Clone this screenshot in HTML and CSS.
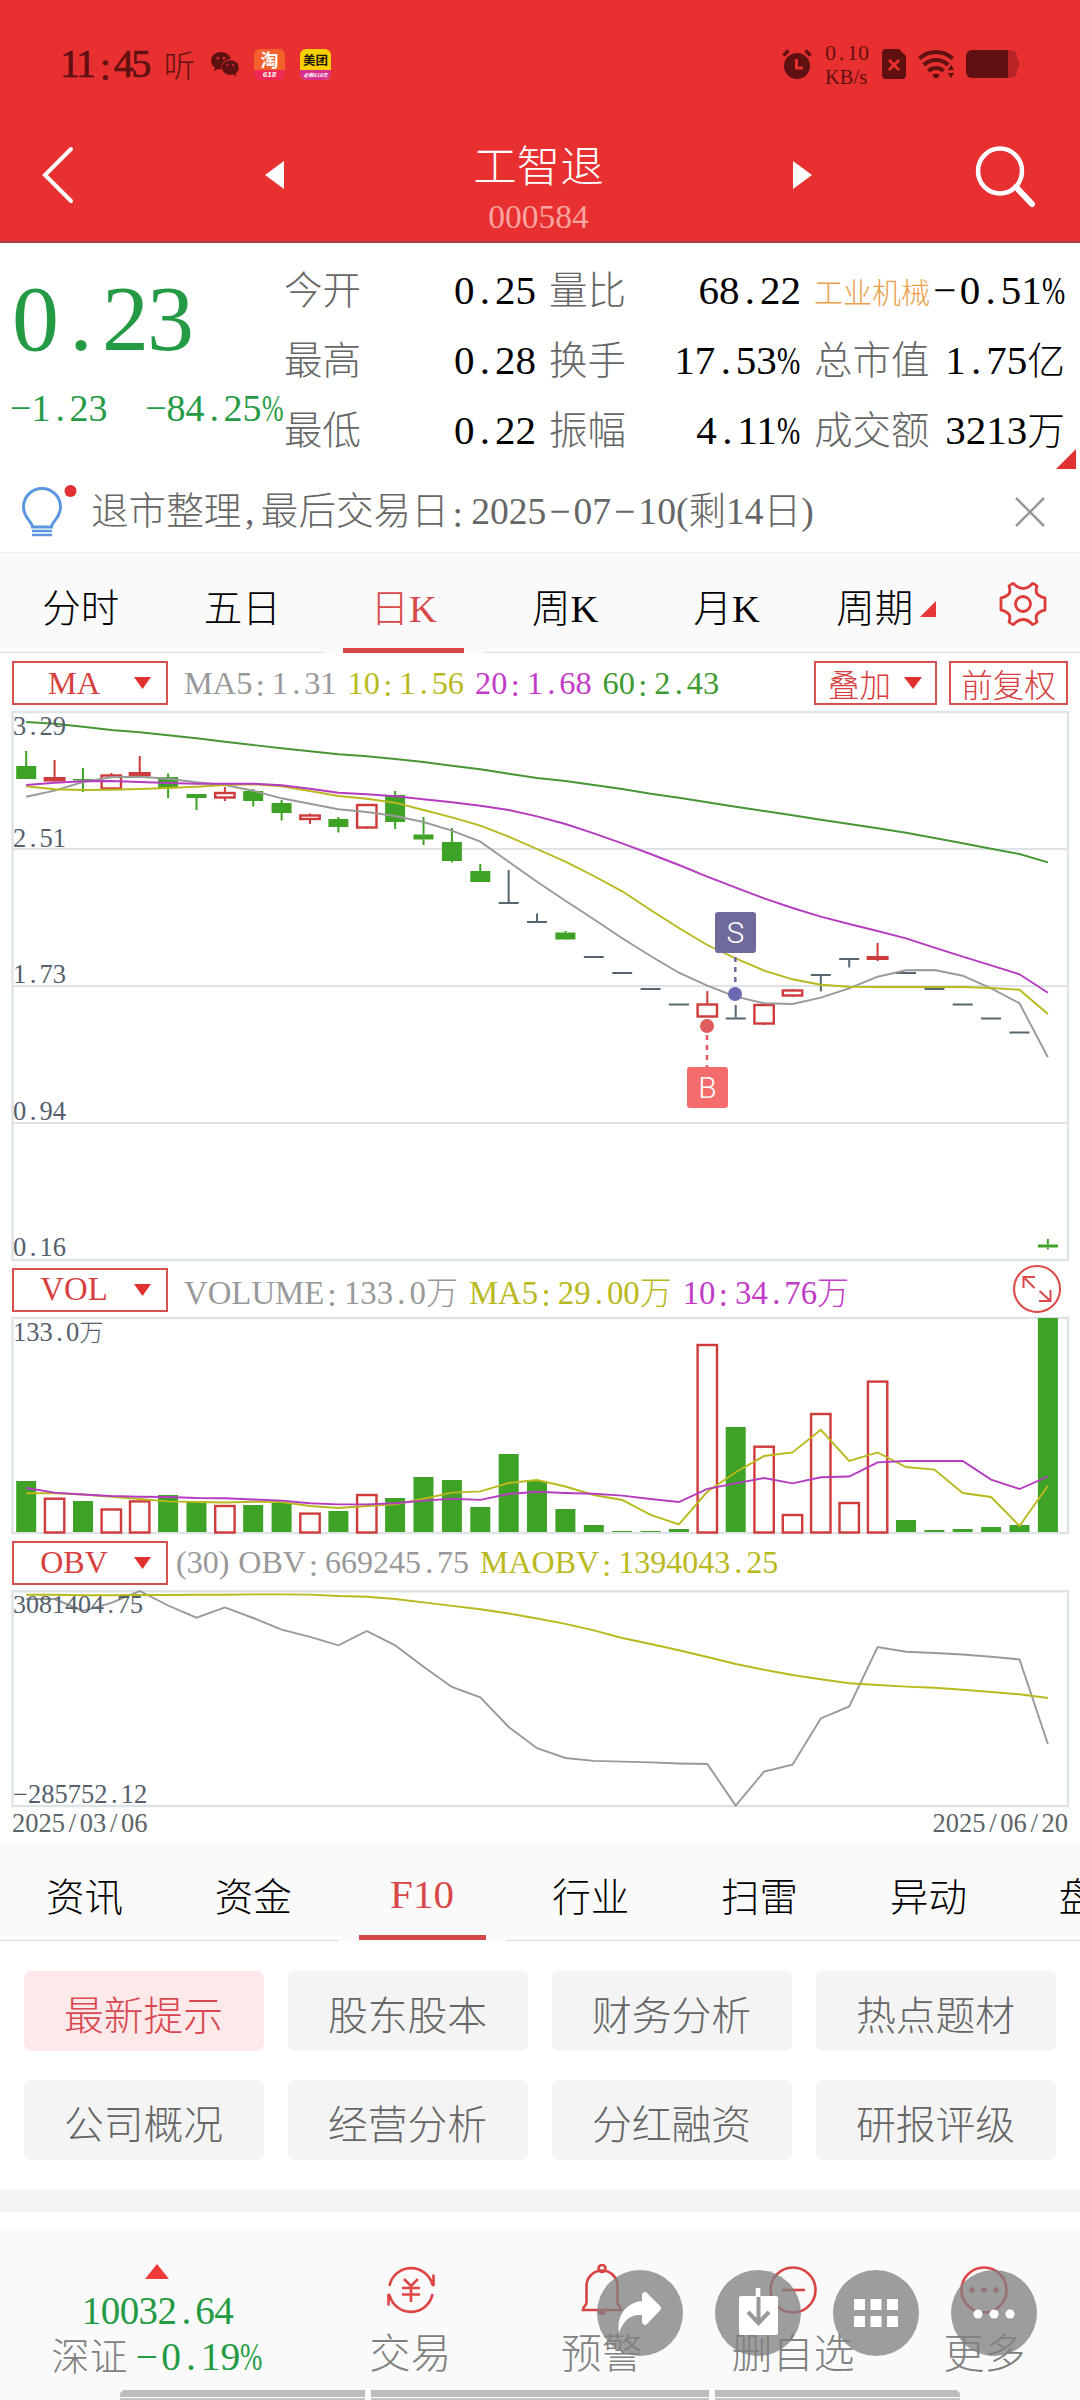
FILE: index.html
```html
<!DOCTYPE html>
<html lang="zh-CN">
<head>
<meta charset="utf-8">
<title>工智退 000584</title>
<link rel="stylesheet" href="styles.css">
</head>
<body>
<div class="phone">
  <header class="top">
    <div class="status">
      <span class="clock">11<i class="c">:</i>45</span>
      <span class="listen">听</span>
      <svg class="wechat" width="28" height="25" viewBox="0 0 29 26"><path fill="#5f1010" d="M10.500 0C4.500 0 0 4 0 9c0 3 1.500 5.300 4 7l-1 4 4-2.200c1.500.4 2.600.5 4 .4C10 12 14 7.500 20.500 7.200 19.500 3 15.500 0 10.500 0z"/><path fill="#5f1010" d="M20 8.500c-5 0-8.700 3.400-8.700 7.600s3.700 7.600 8.700 7.600c1 0 2-.1 3-.4l3.500 2-.9-3.100c2-1.500 3.200-3.600 3.200-6.100 0-4.200-3.800-7.600-8.800-7.600z"/><g fill="#e83030"><circle cx="7" cy="6.500" r="1.300"/><circle cx="13.500" cy="6.500" r="1.300"/><circle cx="17" cy="13.500" r="1.100"/><circle cx="23" cy="13.500" r="1.100"/></g></svg>
      <span class="app tao"><b>淘</b><em>618</em></span>
      <span class="app mei"><b>美团</b><em>必剩618元</em></span>
      <span class="grow"></span>
      <svg class="alarm" width="30" height="30" viewBox="0 0 30 30"><circle cx="15" cy="17" r="13" fill="#5f1010"/><path d="M1.500 6.500l5-5M28.500 6.500l-5-5" stroke="#5f1010" stroke-width="3.500"/><path d="M14.500 10v9h6.500" stroke="#e83030" stroke-width="3" fill="none"/></svg>
      <span class="net"><span>0<i class="d">.</i>10</span><span class="unit">KB/s</span></span>
      <svg class="sim" width="24" height="30" viewBox="0 0 24 30"><path fill="#5f1010" d="M4 0h13l7 7v19a4 4 0 0 1-4 4H4a4 4 0 0 1-4-4V4a4 4 0 0 1 4-4z"/><path d="M7 11l10 10M17 11L7 21" stroke="#e83030" stroke-width="3"/></svg>
      <svg class="wifi" width="37" height="30" viewBox="0 0 37 30"><g fill="none" stroke="#5f1010" stroke-width="4"><path d="M1.500 9.500a24 24 0 0 1 33 0"/><path d="M6 16a17 17 0 0 1 24 0"/><path d="M10.500 22a11 11 0 0 1 15 0"/></g><path fill="#5f1010" d="M14 26a6 6 0 0 1 8 0l-4 4z"/><path fill="#5f1010" stroke="#e83030" d="M33 15l4 6.500h-8zM33 30l-4-6.500h8z"/></svg>
      <svg class="battery" width="54" height="28" viewBox="0 0 54 28"><path fill="#b92427" d="M40 0h5a6 6 0 0 1 6 6v3l3 5-3 5v3a6 6 0 0 1-6 6h-5z"/><path fill="#5f1010" d="M6 0h36v28H6a6 6 0 0 1-6-6V6a6 6 0 0 1 6-6z"/></svg>
    </div>
    <div class="nav">
      <svg class="back" width="32" height="58" viewBox="0 0 32 58"><path d="M29 3L3 29l26 26" fill="none" stroke="#fff" stroke-width="4" stroke-linecap="round"/></svg>
      <svg class="prev" width="19" height="28" viewBox="0 0 19 28"><path d="M19 0v28L0 14z" fill="#fff"/></svg>
      <div class="name"><span class="stock">工智退</span><span class="code">000584</span></div>
      <svg class="next" width="19" height="28" viewBox="0 0 19 28"><path d="M0 0v28l19-14z" fill="#fff"/></svg>
      <svg class="search" width="62" height="64" viewBox="0 0 62 64"><ellipse cx="25" cy="26" rx="22" ry="22.500" fill="none" stroke="#fff" stroke-width="4.500"/><path d="M41 42l16 17" stroke="#fff" stroke-width="6" stroke-linecap="round"/></svg>
    </div>
  </header>

  <section class="quote">
    <div class="last">
      <div class="price">0<i class="d">.</i>23</div>
      <div class="change"><span>−1<i class="d">.</i>23</span><span>−84<i class="d">.</i>25<i class="p">%</i></span></div>
    </div>
    <dl class="stats">
      <div><dt>今开</dt><dd>0<i class="d">.</i>25</dd></div>
      <div><dt>量比</dt><dd>68<i class="d">.</i>22</dd></div>
      <div><dt class="sector">工业机械</dt><dd><i class="m">−</i>0<i class="d">.</i>51<i class="p">%</i></dd></div>
      <div><dt>最高</dt><dd>0<i class="d">.</i>28</dd></div>
      <div><dt>换手</dt><dd>17<i class="d">.</i>53<i class="p">%</i></dd></div>
      <div><dt>总市值</dt><dd>1<i class="d">.</i>75<small>亿</small></dd></div>
      <div><dt>最低</dt><dd>0<i class="d">.</i>22</dd></div>
      <div><dt>振幅</dt><dd>4<i class="d">.</i>11<i class="p">%</i></dd></div>
      <div><dt>成交额</dt><dd>3213<small>万</small></dd></div>
    </dl>
    <svg class="corner" width="20" height="20"><path d="M20 0v20H0z" fill="#e03030"/></svg>
  </section>

  <section class="notice">
    <svg width="56" height="54" viewBox="0 0 56 54"><path d="M11.500 42c0-5-9-9-9-20a18.500 18.500 0 0 1 37 0c0 11-9 15-9 20z" fill="#fff" stroke="#5b97e0" stroke-width="3"/><path d="M11 46h20M11 50h20" stroke="#5b97e0" stroke-width="2.500"/><circle cx="49.500" cy="6" r="6" fill="#e03030"/></svg>
    <p>退市整理<i class="k">,</i>最后交易日<i class="c">:</i>2025<i class="m">−</i>07<i class="m">−</i>10(剩14日)</p>
    <svg width="30" height="30" viewBox="0 0 30 30"><path d="M1 1l28 28M29 1L1 29" stroke="#999" stroke-width="2.500"/></svg>
  </section>

  <nav class="tabs period">
    <a>分时</a><a>五日</a><a class="on">日K</a><a>周K</a><a>月K</a>
    <a>周期<svg width="16" height="16"><path d="M16 0v16H0z" fill="#e83838"/></svg></a>
    <svg class="gear" width="48" height="46" viewBox="-24 -23 48 46"><path d="M-9.500-20.500Q-11-20.500-14-18Q-11.500-11-16-8.500Q-19-6.500-22-6V6Q-19 6.500-16 8.500Q-11.500 11-14 18Q-11 20.500-9.500 20.500Q-5 15.500 0 15.500T9.500 20.500Q11 20.500 14 18Q11.500 11 16 8.500Q19 6.500 22 6V-6Q19-6.500 16-8.500Q11.500-11 14-18Q11-20.500 9.500-20.500Q5-15.500 0-15.500T-9.500-20.500z" fill="none" stroke="#dc3c3c" stroke-width="2.800" stroke-linejoin="round"/><circle r="7.500" fill="none" stroke="#dc3c3c" stroke-width="2.800"/></svg>
  </nav>

  <section class="charts">
    <div class="legend">
      <span class="pick"><b>MA</b><svg width="17" height="12"><path d="M0 0h17l-8.500 12z" fill="#e03030"/></svg></span>
      <span class="gray">MA5<i class="c">:</i>1<i class="d">.</i>31</span><span class="olive">10<i class="c">:</i>1<i class="d">.</i>56</span><span class="pink">20<i class="c">:</i>1<i class="d">.</i>68</span><span class="green">60<i class="c">:</i>2<i class="d">.</i>43</span>
      <span class="grow"></span>
      <span class="pick add">叠加<svg width="18" height="12"><path d="M0 0h18l-9 12z" fill="#e03030"/></svg></span>
      <span class="pick adj">前复权</span>
    </div>
    <div class="plot">
      <svg id="price" width="1080" height="548" viewBox="0 712 1080 548"></svg>
      <span class="tick" style="top:1px">3<i class="d">.</i>29</span>
      <span class="tick" style="top:113px">2<i class="d">.</i>51</span>
      <span class="tick" style="top:249px">1<i class="d">.</i>73</span>
      <span class="tick" style="top:386px">0<i class="d">.</i>94</span>
      <span class="tick" style="top:522px">0<i class="d">.</i>16</span>
    </div>
    <div class="legend vol">
      <span class="pick"><b>VOL</b><svg width="17" height="12"><path d="M0 0h17l-8.500 12z" fill="#e03030"/></svg></span>
      <span class="gray">VOLUME<i class="c">:</i>133<i class="d">.</i>0<small>万</small></span><span class="olive">MA5<i class="c">:</i>29<i class="d">.</i>00<small>万</small></span><span class="pink">10<i class="c">:</i>34<i class="d">.</i>76<small>万</small></span>
      <span class="grow"></span>
      <svg class="expand" width="50" height="50" viewBox="-25 -25 50 50"><g fill="none" stroke="#dc4848" stroke-width="2"><circle r="23"/><path d="M-13.500-1V-12H-2M-13-11.500L-2.500-1M13.500 1V12H2M13 11.500L2.500 2"/></g></svg>
    </div>
    <div class="plot">
      <svg id="volume" width="1080" height="215" viewBox="0 1318 1080 215"></svg>
      <span class="tick" style="top:1px">133<i class="d">.</i>0<small>万</small></span>
    </div>
    <div class="legend obv">
      <span class="pick"><b>OBV</b><svg width="17" height="12"><path d="M0 0h17l-8.500 12z" fill="#e03030"/></svg></span>
      <span class="gray par">(30)</span><span class="gray">OBV<i class="c">:</i>669245<i class="d">.</i>75</span><span class="olive">MAOBV<i class="c">:</i>1394043<i class="d">.</i>25</span>
    </div>
    <div class="plot">
      <svg id="obv" width="1080" height="215" viewBox="0 1591 1080 215"></svg>
      <span class="tick wide" style="top:1px">3081404<i class="d">.</i>75</span>
      <span class="tick" style="top:190px">−285752<i class="d">.</i>12</span>
    </div>
    <div class="dates"><span>2025<i class="s">/</i>03<i class="s">/</i>06</span><span>2025<i class="s">/</i>06<i class="s">/</i>20</span></div>
  </section>

  <nav class="tabs info">
    <a>资讯</a><a>资金</a><a class="on">F10</a><a>行业</a><a>扫雷</a><a>异动</a><a>盘口</a>
  </nav>

  <section class="chips">
    <a class="on">最新提示</a><a>股东股本</a><a>财务分析</a><a>热点题材</a>
    <a>公司概况</a><a>经营分析</a><a>分红融资</a><a>研报评级</a>
  </section>
  <div class="band"></div>

  <footer class="bar">
    <div class="index">
      <svg width="24" height="15"><path d="M12 0l12 15H0z" fill="#f03c38"/></svg>
      <span class="val">10032<i class="d">.</i>64</span>
      <span class="row"><span>深证</span><b><i class="m">−</i>0<i class="d">.</i>19<i class="p">%</i></b></span>
    </div>
    <a><svg width="52" height="52" viewBox="-26 -26 52 52"><g fill="none" stroke="#e04444" stroke-width="2.600"><path d="M-21.500-4A22 22 0 0 1 21.500-5M21.500 4A22 22 0 0 1-21.500 5M22.500-15.500v11.500L20-9M-22.500 15.500V4L-20 9M-7-11L0-4 7-11M0-4v16M-9-2H9M-9 4.500H9"/></g></svg>交易</a>
    <a><svg width="52" height="52" viewBox="-26 -26 52 52"><g fill="none" stroke="#d84444" stroke-width="2.600"><circle cy="-21.500" r="3.500"/><path d="M-19 20C-19 15-15.500 17-15.500 12V-4a15.500 15.500 0 0 1 31 0v16c0 5 3.500 3 3.500 8z"/></g><path d="M-4 21h8a4 4 0 0 1-8 0z" fill="#d84444"/></svg>预警</a>
    <a><svg width="52" height="52" viewBox="-26 -26 52 52"><g fill="none" stroke="#d84444" stroke-width="2.600"><circle r="22.500"/><path d="M-11 0H12"/></g></svg>删自选</a>
    <a><svg width="52" height="52" viewBox="-26 -26 52 52"><circle r="22.500" fill="none" stroke="#e04444" stroke-width="2.600"/><g fill="#d84444"><circle cx="-12" r="2.700"/><circle r="2.700"/><circle cx="12" r="2.700"/></g></svg>更多</a>
    <div class="floats">
      <span><svg viewBox="-43 -43 86 86"><path d="M-21 20C-24-1-10-11 2-12v-6q0-3 4-3L20-7q2 2 0 4.500L6 12q-4 0-4-4V2C-10 1-17 8-21 20z" fill="#fff"/></svg></span>
      <span><svg viewBox="-43 -43 86 86"><rect x="-19" y="-17" width="39" height="39" rx="2" fill="#fff"/><path d="M0-25v9" stroke="#fff" stroke-width="4.500"/><path d="M.500-16V9M-10-1L.500 10 11-1" fill="none" stroke="#999" stroke-width="4"/></svg></span>
      <span><svg viewBox="-43 -43 86 86"><path d="M-22-14h11v11h-11zM-5.500-14h11v11h-11zM11-14h11v11H11zM-22 3h11v11h-11zM-5.500 3h11v11h-11zM11 3h11v11H11z" fill="#fff"/></svg></span>
      <span><svg viewBox="-43 -43 86 86"><g fill="#fff"><circle cx="-16" cy="1" r="4.600"/><circle cy="1" r="4.600"/><circle cx="16" cy="1" r="4.600"/></g></svg></span>
    </div>
    <div class="gesture"><i></i><i></i><i></i></div>
  </footer>
</div>
<script src="charts.js"></script>
</body>
</html>
```
FILE: styles.css
```css
* { box-sizing: border-box; margin: 0; padding: 0; }
body { width: 1080px; height: 2400px; overflow: hidden; background: #fff; }
.phone {
  width: 1080px; height: 2400px; position: relative; overflow: hidden;
  font-family: "Liberation Serif", "Noto Sans CJK SC", serif;
  font-weight: 300; color: #000; white-space: nowrap;
}
svg { display: block; flex: none; }
i { font-style: normal; }
/* punctuation set on half-width cells */
.d { padding: 0 .12em 0 .13em; }
.c { padding: 0 .22em 0 .1em; position: relative; top: .08em; }
.k { padding: 0 .17em 0 .1em; }
.s { padding: 0 .14em; }
.m { padding: 0 .08em; }
.p { display: inline-block; width: .59em; transform: scaleX(.68); transform-origin: 0 50%; }
small { font-size: .92em; }
.grow { flex: 1; }

.top { height: 243px; background: #e83030; border-bottom: 2px solid #a04040; }
.status { height: 128px; display: flex; align-items: center; padding: 0 60px 0 60px; color: #5f1010; }
.clock { font-size: 40px; letter-spacing: -2.4px; width: 104px; line-height: 44px; -webkit-text-stroke: .7px #5f1010; }
.clock .c { padding: 0 .13em 0 .15em; }
.listen { font: 300 31px "Noto Sans CJK SC", sans-serif; line-height: 40px; width: 47px; }
.app { width: 31px; height: 31px; border-radius: 6px; overflow: hidden; text-align: center; font-family: "Noto Sans CJK SC", sans-serif; margin-left: 15px; display: flex; flex-direction: column; }
.app b { height: 21px; line-height: 21px; font-weight: 700; }
.app em { height: 10px; line-height: 10px; font-weight: 700; color: #fff; }
.tao { background: #f2602c; }
.tao b { font-size: 18px; color: #fff; }
.tao em { font: italic 700 8px "Liberation Sans", sans-serif; line-height: 10px; background: #ee2850; }
.mei { background: #fcd000; }
.mei b { font-size: 12.5px; color: #201800; }
.mei em { font-size: 5px; background: #d8308c; }
.net { width: 44px; margin: 2px 13px 0 13px; display: flex; flex-direction: column; font-size: 22px; line-height: 24px; }
.net .unit { font-size: 20.5px; }
.wifi { margin: 0 11px 0 12px; }
.nav { height: 115px; display: flex; padding: 17px 43px 0 42px; }
.back { margin-top: 1px; }
.prev { margin: 16px 0 0 191px; }
.name { flex: 1; display: flex; flex-direction: column; align-items: center; color: #fff; }
.stock { font-size: 43.5px; line-height: 46px; margin-top: -1px; }
.code { font-size: 33.5px; line-height: 38px; color: #f9a5a0; margin-top: 8px; }
.next { margin: 16px 163px 0 0; }

.quote { height: 236px; display: flex; position: relative; }
.last { width: 285px; padding: 20px 0 0 12px; color: #259a45; }
.price { font-size: 94px; line-height: 110px; letter-spacing: -2px; }
.change { display: flex; justify-content: space-between; font-size: 38px; line-height: 40px; padding-right: 1px; margin-top: 15px; margin-left: -2px; }
.stats { flex: 1; display: grid; grid-template-columns: 252px 252px 251px; grid-auto-rows: 70px; column-gap: 13px; padding-top: 12px; margin-left: -1px; }
.stats > div { display: flex; justify-content: space-between; align-items: baseline; line-height: 70px; }
dt { font-size: 38.5px; color: #666; }
dd { font-size: 41px; }
.sector { font-size: 29px; color: #e9a04a; }
.corner { position: absolute; right: 4px; top: 206px; }

.notice { height: 74px; display: flex; align-items: center; padding: 0 35px 7px 21px; border-bottom: 1px solid #eee; }
.notice p { flex: 1; padding: 0 0 9px 14px; font-size: 37.6px; color: #666; }

.tabs { display: flex; background: #fafafa; font-size: 38.5px; position: relative; }
.tabs a { flex: none; display: flex; justify-content: center; align-items: center; border-bottom: 1px solid #d8d8d4; position: relative; }
.tabs .on { color: #d84848; border-color: transparent; }
.tabs .on::after { content: ""; position: absolute; bottom: -1px; height: 5px; background: #d84848; }
.period { height: 100px; border-bottom: 0; }
.period a { width: 161.500px; padding-top: 4px; }
.period .on::after { left: 20px; width: 121px; }
.period a svg { margin: 8px 4px 0 7px; }
.period::after { content: ""; flex: 1; order: 1; border-bottom: 1px solid #d8d8d4; }
.gear { margin: 28px -78px 0 30px; }
.info { height: 98px; overflow: hidden; }
.info a { width: 168.8px; padding-top: 4px; }
.info .on { font-size: 41px; }
.info .on::after { left: 21px; width: 127px; bottom: 0; }

.charts { height: 1190px; }
.legend { height: 59px; display: flex; align-items: center; padding: 0 12px; font-size: 32.400px; }
.legend > span { margin-right: 11px; padding-top: 1px; }
.legend .pick { width: 156px; height: 44px; border: 2px solid #d85050; color: #d84040; display: flex; align-items: center; justify-content: space-between; padding: 0 15px 0 0; margin-right: 16px; margin-top: 1px; }
.pick b { font-weight: 400; flex: 1; text-align: center; }
.legend .grow { margin: 0; }
.legend .add { width: 123px; padding: 0 13px 0 12px; font-size: 31.500px; margin-right: 12px; }
.legend .adj { width: 119px; padding: 0; justify-content: center; font-size: 31.500px; margin-right: 0; }
.vol, .obv { height: 58px; font-size: 32px; }
.vol { font-size: 32.800px; }
.vol small { font-size: 32px; }
.expand { margin-right: 6px; }
.legend .par { margin: 0 9px 0 -8px; }
.gray { color: #999; }
.olive { color: #b9b91e; }
.pink { color: #c23cc8; }
.green { color: #3d9a30; }
.plot { position: relative; }
.plot svg { overflow: visible; }
.tick { position: absolute; left: 13px; font-size: 26.5px; line-height: 26px; color: #55606c; }
.wide { font-size: 26px; }
.dates { height: 37px; display: flex; justify-content: space-between; padding: 2px 12px 0; font-size: 26.5px; line-height: 31px; color: #5c6468; }

.chips { height: 248px; display: grid; grid-template-columns: repeat(4, 240px); column-gap: 24px; grid-auto-rows: 80px; row-gap: 29px; padding: 30px 24px; }
.chips a { background: #f4f4f4; border-radius: 8px; color: #666; font-size: 39.8px; display: flex; justify-content: center; align-items: center; padding: 2px 1px 0 0; }
.chips .on { background: #fde9e9; color: #d84850; }
.band { height: 23px; background: #f4f4f4; }

.bar { height: 172px; margin-top: 16px; background: #fafafa; display: flex; position: relative; color: #808080; font-size: 41px; }
.bar > a { width: 191.300px; display: flex; flex-direction: column; align-items: center; padding-top: 36px; line-height: 60px; }
.bar > a svg { margin-bottom: 8px; }
.index { width: 315px; display: flex; flex-direction: column; align-items: center; padding-top: 36px; }
.val { font-size: 39px; letter-spacing: -.6px; line-height: 44px; margin: 10px 0 0; color: #259a45; }
.row { display: flex; align-items: center; font-size: 38px; line-height: 48px; gap: 5px; }
.row b { font-weight: 400; color: #259a45; font-size: 39.5px; }
.floats { position: absolute; left: 597px; top: 42px; display: flex; gap: 32px; }
.floats span { width: 86px; height: 86px; border-radius: 50%; background: rgba(128, 128, 128, .76); }
.gesture { position: absolute; left: 120px; bottom: 0; height: 10px; display: flex; gap: 6px; background: #fff; }
.gesture i { width: 245px; border-top: 7px solid #bcbcbc; border-bottom: 2px solid #c4c4c4; }
.gesture i:nth-child(2) { width: 338px; }
.gesture i:first-child { border-top-left-radius: 5px; }
.gesture i:last-child { border-top-right-radius: 5px; }
```
FILE: charts.js
```js
const X = i => 26.2 + i * 28.38;
const GREEN = '#3ea226', RED = '#cf3a3a', DARK = '#56666e', GRID = '#dde3e7';
const rect = (x, y, w, h, fill, stroke) =>
  `<rect x="${x.toFixed(1)}" y="${y}" width="${w}" height="${h}" fill="${fill}"${stroke ? ` stroke="${stroke}" stroke-width="2.4"` : ''}/>`;
const line = (x1, y1, x2, y2, c, w = 2, extra = '') =>
  `<path d="M${x1} ${y1}L${x2} ${y2}" stroke="${c}" stroke-width="${w}" ${extra}/>`;
const curve = (ys, c) =>
  `<polyline points="${ys.map((y, i) => X(i).toFixed(1) + ',' + y).join(' ')}" fill="none" stroke="${c}" stroke-width="1.9"/>`;
const frame = (top, bottom) => rect(12.5, top, 1055.5, bottom - top, 'none', GRID);

// type, wick top, body top, body bottom, wick bottom
const candles = [
  ['g',751,766,779,779],['r',760,777,781.500,782],['g',768,779,780.500,792],['h',773,775.500,788.500,789],['r',756,772,776.500,778],
  ['g',773.500,777,788,798],['g',794,794,798,810],['h',787,793,797.500,801],['g',789,791,801,806.500],['g',800,803,813,820.500],
  ['h',813.500,815.500,819,824],['g',817,819,827,832.500],['h',804,805,827.500,829],['g',791,795,822,829],['g',817,834.500,839.500,845],
  ['g',828,842,861,862.500],['g',864,871,882,882],['d',870,902,904,904],['d',913.500,921,923,923],['g',931,932.500,939.500,940],
  ['d',956,956,958,958],['d',972,972,974,974],['d',988,988,990,990],['d',1003.500,1003.500,1005.500,1005.500],['h',991,1004.500,1016.500,1017],
  ['d',1005,1017.500,1019.500,1019.500],['h',1004,1005,1023.500,1025],['h',989,990.500,995.500,997],['d',974,974,976,991.500],['d',958,958,960,967.500],
  ['r',943,956,960,961],['d',972,972,974,974],['d',988,988,990,990],['d',1003.500,1003.500,1005.500,1005.500],['d',1017.500,1017.500,1019.500,1019.500],
  ['d',1031.500,1031.500,1033.500,1033.500],['g',1239,1244.500,1247.500,1249.500]
];
const ma5 = [796.7,790.7,782,777.3,776.7,778.7,782.3,785,790.7,798.3,803.7,809.3,812,816,822,830.7,841.7,861.7,881.7,900.7,919.3,938.3,956,972.7,985.7,996.7,1003.3,1004,997.7,988.3,976.7,970.3,970,975.7,988.3,1003.3,1057.3];
const ma10 = [786.3,789.3,790,789.7,789,788,786.7,785,784.3,786.3,791,796,798.7,802.7,810,817.3,825.7,836.7,849,861.7,876,891.3,910,928,945,958.3,970.7,979.3,984.7,986.7,987,987,987,987,988,989.7,1014];
const ma20 = [785,782.7,781.3,781,782,783,783.7,783.7,783.7,785.3,788.7,792.7,794.3,796.3,799.3,802.3,805.7,810,816.3,824,833.3,843.3,854,865,876.7,887.7,898.3,908,916.7,924,931,938.3,947.7,956.7,965.3,974.3,992.7];
const ma60 = [722,723.7,726.7,730,732.3,735.3,738.3,741.7,745,748.3,751.3,754.3,756.3,759,762,765.7,769.3,773.7,778,781,785,789,793.7,797.7,802.3,806.7,811,815.3,819.7,824,828.3,832.7,838,843.3,848.7,854,862.3];

let s = frame(712, 1260);
[849, 986, 1123].forEach(y => s += line(12, y, 1068, y, GRID));
candles.forEach(([t, hi, a, b, lo], i) => {
  const x = X(i), c = { g: GREEN, r: RED, h: RED, d: DARK }[t];
  if (a > hi) s += line(x, hi, x, a, c);
  if (lo > b) s += line(x, b, x, lo, c);
  s += t === 'h' ? rect(x - 9.7, a, 19.4, b - a, '#fffdfb', c) : rect(x - (t === 'r' ? 11 : 10), a, t === 'r' ? 22 : 20, b - a, c);
});
s += curve(ma5, '#999') + curve(ma10, '#b9b91e') + curve(ma20, '#b53cc0') + curve(ma60, '#479636');
const tag = (x, y, fill, t) =>
  `<rect x="${x}" y="${y}" width="41" height="41" rx="3" fill="${fill}"/><text x="${x + 20.5}" y="${y + 31}" font-family="Roboto, sans-serif" font-size="30" font-weight="300" text-anchor="middle" fill="#fff">${t}</text>`;
s += line(735.3, 957, 735.3, 988, '#6f6a9c', 2.5, 'stroke-dasharray="5 5"') + '<circle cx="735" cy="994" r="7" fill="#6a6ab4"/>' + tag(715, 912, '#6f6a9c', 'S');
s += line(707, 1035, 707, 1067, '#e05c5c', 2.5, 'stroke-dasharray="5 5"') + '<circle cx="707" cy="1026" r="7" fill="#e05c5c"/>' + tag(687, 1067, '#f46c6c', 'B');
document.getElementById('price').innerHTML = s;

// bar tops; up days are drawn hollow
const vol = [1481,1498.7,1501,1509.5,1501.4,1495,1501.8,1506,1505,1503,1513.6,1511,1495,1498,1477,1480,1507,1454,1481,1509,1525,1531,1531,1529,1345,1427,1446.7,1515,1414,1503,1381.6,1520,1530,1529,1527,1525,1318];
const up = new Set([1, 3, 4, 7, 10, 12, 24, 26, 27, 28, 29, 30]);
const v5 = [1493.3,1493.3,1494.5,1496.8,1499,1501.4,1502,1502.5,1501.8,1502,1506,1508,1506,1504.4,1498.7,1492.6,1491.4,1483,1480,1486.5,1495,1500,1514.8,1524.3,1491.8,1472.3,1456,1452.4,1429.8,1460.8,1452.4,1467,1469.6,1493,1497,1526,1485.7];
const v10 = [1488,1492.6,1494.5,1496,1496.8,1497,1498,1498.3,1499.5,1500.6,1503.3,1504.4,1504.4,1503.3,1500.6,1498.7,1499.9,1494,1491.8,1493,1493.7,1495.6,1499,1502,1488.8,1483.4,1478,1483.4,1477.3,1476.5,1462.4,1461,1461,1461,1479.6,1489,1476.5];
s = frame(1318, 1533);
vol.forEach((y, i) => s += up.has(i) ? rect(X(i) - 9.7, y, 19.4, 1532.5 - y, '#fffefd', RED) : rect(X(i) - 10, y, 20, 1532 - y, GREEN));
s += curve(v5, '#b9b91e') + curve(v10, '#b53cc0');
document.getElementById('volume').innerHTML = s;

const obv = [1599,1599,1611,1602.8,1591,1605.5,1617.7,1607.4,1618,1629.6,1636.9,1645.3,1631,1645.3,1666.7,1687,1697.3,1727,1748.2,1758,1760.9,1761.6,1762.4,1763.5,1764,1805.6,1771.6,1764.7,1718.4,1706.5,1647,1651.8,1653,1654.5,1656.8,1659.4,1744];
const maobv = [1594.8,1594.8,1595.2,1595.2,1595,1595,1594.8,1594.8,1594.4,1594.4,1594.6,1596,1596.7,1599,1602.4,1605.9,1609.3,1613.5,1618.5,1623.9,1630.4,1638,1644,1650.3,1657,1664,1669.8,1675,1679.3,1683.2,1685,1686.6,1687.8,1689.7,1692,1694.3,1698];
document.getElementById('obv').innerHTML = frame(1591.3, 1806) + curve(obv, '#999') + curve(maobv, '#b9b91e');
```
